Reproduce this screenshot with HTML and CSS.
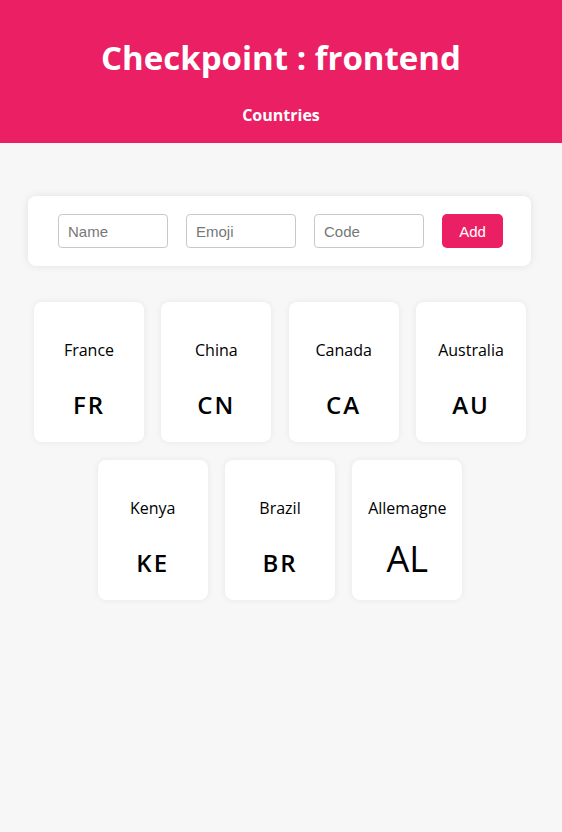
FILE: index.html
```html
<!DOCTYPE html>
<html lang="en">
<head>
<meta charset="utf-8">
<title>Checkpoint : frontend</title>
<link rel="stylesheet" href="styles.css">
</head>
<body>
<header class="header">
  <h1 class="title">Checkpoint : frontend</h1>
  <h2 class="subtitle">Countries</h2>
</header>
<main class="main">
  <form class="form">
    <input class="field" type="text" placeholder="Name">
    <input class="field" type="text" placeholder="Emoji">
    <input class="field" type="text" placeholder="Code">
    <button class="add" type="button">Add</button>
  </form>
  <section class="list">
    <div class="card"><div class="name">France</div><div class="code"><span class="flag">FR</span></div></div>
    <div class="card"><div class="name">China</div><div class="code"><span class="flag">CN</span></div></div>
    <div class="card"><div class="name">Canada</div><div class="code"><span class="flag">CA</span></div></div>
    <div class="card"><div class="name">Australia</div><div class="code"><span class="flag">AU</span></div></div>
    <div class="card"><div class="name">Kenya</div><div class="code"><span class="flag">KE</span></div></div>
    <div class="card"><div class="name">Brazil</div><div class="code"><span class="flag">BR</span></div></div>
    <div class="card"><div class="name">Allemagne</div><div class="code">AL</div></div>
  </section>
</main>
</body>
</html>
```
FILE: styles.css
```css
* { box-sizing: border-box; }
html, body { margin: 0; padding: 0; }
body {
  background: #f7f7f7;
  font-family: "Open Sans", "Noto Sans", sans-serif;
  color: #000;
  min-height: 832px;
}
.header {
  background: #eb1f64;
  color: #fff;
  text-align: center;
  height: 143px;
  padding-top: 35px;
}
.title {
  margin: 0;
  font-size: 33px;
  line-height: 46px;
  font-weight: 700;
}
.subtitle {
  margin: 23px 0 0;
  font-size: 16px;
  line-height: 22px;
  font-weight: 700;
}
.main {
  padding: 53px 31px 0 28px;
}
.form {
  margin: 0;
  background: #fff;
  border-radius: 8px;
  box-shadow: 0 0 8px rgba(0,0,0,0.09);
  height: 70px;
  padding-left: 2px;
  display: flex;
  align-items: center;
  justify-content: center;
  gap: 18px;
}
.field {
  width: 110px;
  height: 34px;
  border: 1px solid #c8c8c8;
  border-radius: 4px;
  padding: 0 9px;
  font-family: "Liberation Sans", Arial, sans-serif;
  font-size: 15px;
  color: #333;
  background: #fff;
}
.field::placeholder { color: #777; }
.add {
  width: 61px;
  height: 34px;
  border: 0;
  border-radius: 5px;
  background: #eb1f64;
  color: #fff;
  font-family: "Liberation Sans", Arial, sans-serif;
  font-size: 15px;
}
.list {
  margin: 36px -23px 0 -22px;
  display: flex;
  flex-wrap: wrap;
  justify-content: center;
  gap: 18px 17.33px;
}
.card {
  width: 110px;
  height: 140px;
  background: #fff;
  border-radius: 8px;
  box-shadow: 0 0 6px rgba(0,0,0,0.07);
  display: flex;
  flex-direction: column;
  align-items: center;
  padding-top: 37px;
}
.name {
  font-size: 16px;
  line-height: 22px;
}
.code {
  margin-top: 18px;
  font-size: 36px;
  line-height: 44px;
}
.flag {
  font-size: 24px;
  font-weight: 600;
  letter-spacing: 2px;
}
```
